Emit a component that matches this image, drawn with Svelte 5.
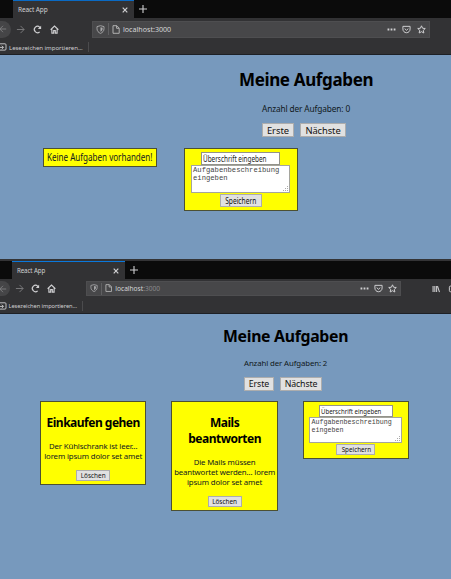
<script>
  const none = [];
  const tasks = [
    { title: ['Einkaufen gehen'], text: ['Der Kühlschrank ist leer...', 'lorem ipsum dolor set amet'] },
    { title: ['Mails', 'beantworten'], text: ['Die Mails müssen', 'beantwortet werden... lorem', 'ipsum dolor set amet'] }
  ];
</script>

{#snippet chrome(library)}
  <header>
    <div class="tabs">
      <div class="tab">
        <span class="tabname">React App</span>
        <svg class="close" viewBox="0 0 8 8"><path d="M1.7 1.7 6.3 6.3M6.3 1.7 1.7 6.3" stroke-width="1.2" /></svg>
      </div>
      <svg class="plus" viewBox="0 0 8 8"><path d="M4 0V8M0 4H8" stroke-width="1.1" /></svg>
    </div>
    <div class="toolbar">
      <div class="back"><svg viewBox="0 0 10 10"><path d="M9 5H1M5 1 1 5 5 9" stroke-width="1.1" /></svg></div>
      <svg class="forward" viewBox="0 0 10 10"><path d="M1 5H9M5 1 9 5 5 9" stroke-width="1.1" /></svg>
      <svg class="reload" viewBox="0 0 10 10"><path d="M7.4 7.6A3.5 3.5 0 1 1 7.6 2.6L8.4 3.6" stroke-width="1.3" /><path d="M9 .8V4.5H5.3Z" fill="currentColor" stroke="none" /></svg>
      <svg class="home" viewBox="0 0 10 10"><path d="M.7 5.3 5 1.1 9.3 5.3M2.1 4.7V9H4.1V6.3H5.9V9H7.9V4.7" stroke-width="1.25" /></svg>
      <div class="address">
        <svg class="shield" viewBox="0 0 9 9"><path d="M4.5.7 8 1.6V3.7C8 6 6.5 7.6 4.5 8.4 2.5 7.6 1 6 1 3.7V1.6Z" stroke-width=".9" /><path d="M4.5 2.2 6.6 2.8V3.8C6.6 5.2 5.8 6.2 4.5 6.8Z" fill="currentColor" stroke="none" /></svg>
        <i></i>
        <svg class="page" viewBox="0 0 8 9"><path d="M1 .7H4.8L7.2 3.1V8.3H1ZM4.6.8V3.3H7" stroke-width=".9" /></svg>
        <span class="url">localhost<b>:3000</b></span>
        <svg class="dots" viewBox="0 0 10 10"><path d="M.6 4h2v2h-2zM4 4h2v2H4zM7.4 4h2v2h-2z" fill="currentColor" stroke="none" /></svg>
        <svg class="pocket" viewBox="0 0 10 10"><path d="M1 1.5H9V4.4C9 6.8 7.3 8.6 5 8.6S1 6.8 1 4.4ZM3 4 5 5.9 7 4" stroke-width="1.1" /></svg>
        <svg class="star" viewBox="0 0 10 10"><path d="M5 .9 6.2 3.6 9.2 3.9 7 5.9 7.6 8.9 5 7.4 2.4 8.9 3 5.9 .8 3.9 3.8 3.6Z" stroke-width="1.1" /></svg>
      </div>
      {#if library}
        <svg class="library" viewBox="0 0 9 9"><path d="M1.2 1V8M3.2 1V8M5.2 1V8M6.2 1.2 8.4 8" stroke-width="1.2" /></svg>
        <svg class="sidebar" viewBox="0 0 9 9"><path d="M9 1.2H2.3Q1 1.2 1 2.5V6.3Q1 7.6 2.3 7.6H9M4.3 1V7.6" stroke-width="1.1" /></svg>
      {/if}
    </div>
    <div class="bookmarks">
      <svg viewBox="0 0 8 8"><path d="M0 .8H6Q7 .8 7 1.8V6Q7 7.1 6 7.1H0M1 4.4H4.3M2.8 2.7 4.5 4.4 2.8 6" stroke-width=".9" /></svg>
      <span>Lesezeichen importieren...</span>
      <i></i>
    </div>
  </header>
{/snippet}

{#snippet app(items)}
  <main>
    <div class="head">
      <h1>Meine Aufgaben</h1>
      <p class="count">Anzahl der Aufgaben: {items.length}</p>
      <div class="nav"><div class="btn first">Erste</div><div class="btn next">Nächste</div></div>
    </div>
    <div class="cards">
      {#each items as item}
        <article class="card">
          <h2>{#each item.title as line}<span>{line}</span>{/each}</h2>
          <p>{#each item.text as line}<span>{line}</span>{/each}</p>
          <div class="btn delete">Löschen</div>
        </article>
      {:else}
        <div class="card empty"><span>Keine Aufgaben vorhanden!</span></div>
      {/each}
      <div class="card form">
        <div class="input"><span>Überschrift eingeben</span></div>
        <div class="area">
          <span>Aufgabenbeschreibung</span><span>eingeben</span>
          <svg viewBox="0 0 6 6"><path d="M5 0h1v1H5zM3 2h1v1H3zM5 2h1v1H5zM1 4h1v1H1zM3 4h1v1H3zM5 4h1v1H5z" fill="#aaa" stroke="none" /></svg>
        </div>
        <div class="btn save"><span>Speichern</span></div>
      </div>
    </div>
  </main>
{/snippet}

<div class="shots">
  <section class="one">{@render chrome(false)}{@render app(none)}</section>
  <section class="two">{@render chrome(true)}{@render app(tasks)}</section>
</div>

<style>
  :global(body) { margin: 0; background: #7799bd; }
  * { box-sizing: border-box; }
  .shots { width: 451px; height: 579px; overflow: hidden; font-family: "Noto Sans", "Open Sans", sans-serif; color: #101820; }
  section { overflow: hidden; background: #7799bd; }
  .one { height: 259px; --ts: 6.5px; }
  .two { height: 320px; border-top: 2px solid #343436; --ts: 6.2px; }
  svg { display: block; flex: none; fill: none; stroke: currentColor; overflow: visible; }
  h1, h2, p { margin: 0; }
  span { white-space: nowrap; }

  header { background: #323234; color: #cfcfd1; border-bottom: 1px solid #1d2025; height: 55px; }
  .two header { height: 53px; }
  .tabs { height: 18px; background: #0b0b0b; display: flex; padding-left: 13px; align-items: center; }
  .two .tabs { padding-left: 12px; height: 18px; }
  .tab { width: 121px; height: 18px; background: #323234; border-top: 1px solid #0a78dc; display: flex; align-items: center; justify-content: space-between; padding: 0 5px 0 5px; }
  .one .tab { border-top-color: #0a6ac4; }
  .two .tab { width: 112.5px; }
  .tabname { font-size: var(--ts); line-height: 16px; letter-spacing: -.12px; }
  .close { width: 8px; height: 8px; }
  .plus { width: 8px; height: 8px; margin-left: 5px; }
  .toolbar { height: 22px; display: flex; align-items: center; }
  .two .toolbar { height: 19px; }
  .back { flex: none; width: 11px; height: 17px; background: #454547; border-radius: 0 9px 9px 0; display: flex; align-items: center; color: #828284; }
  .back svg { width: 8px; height: 8px; margin-left: -1px; }
  .two .back { width: 10px; height: 15px; }
  .forward { width: 9px; height: 9px; margin-left: 5px; color: #777779; }
  .reload { width: 9px; height: 9px; margin-left: 8px; }
  .home { width: 9px; height: 9px; margin-left: 8px; }
  .two .reload { margin-left: 7px; }
  .two .home { margin-left: 7px; }
  .address { flex: none; margin-left: 33px; width: 338px; height: 17px; background: #474749; border: 1px solid #4e4e50; display: flex; align-items: center; padding-left: 3px; }
  .two .address { margin-left: 30px; width: 315px; height: 15px; }
  .shield { width: 9px; height: 9px; color: #aaaaac; }
  .address i { width: 1px; height: 12px; background: #606062; margin: 0 3px; }
  .page { width: 8px; height: 9px; color: #bbb; }
  .url { font-size: 7.1px; margin-left: 3px; color: #d5d5d7; }
  .url b { font-weight: 400; }
  .two .url { font-size: 6.6px; }
  .two .url b { color: #89898b; }
  .two .shield, .two .page { zoom: .9; }
  .dots { width: 9px; height: 9px; margin-left: auto; }
  .pocket { width: 9px; height: 9px; margin-left: 6px; }
  .star { width: 9px; height: 9px; margin: 0 3px 0 6px; }
  .two .pocket, .two .star { margin-left: 5px; }
  .library { width: 8px; height: 8px; margin-left: 31px; }
  .sidebar { width: 9px; height: 8px; margin-left: 8px; }
  .bookmarks { height: 14px; display: flex; align-items: center; }
  .two .bookmarks { height: 15px; }
  .bookmarks svg { width: 8px; height: 8px; margin-left: -1px; }
  .bookmarks span { font-size: 6.1px; margin-left: 2px; letter-spacing: -.06px; }
  .two .bookmarks span { font-size: 5.7px; letter-spacing: -.07px; margin-left: 1.5px; }
  .bookmarks i { width: 1px; height: 10px; background: #4b4b4d; margin-left: 5px; }

  .head { padding-left: 239px; height: 93px; padding-top: 15px; }
  h1 { color: #000; font-size: 17px; line-height: 20px; white-space: nowrap; letter-spacing: -.36px; }
  .count { padding-left: 23px; margin-top: 13px; font-size: 8.3px; line-height: 12px; white-space: nowrap; letter-spacing: -.13px; }
  .nav { display: flex; padding-left: 23px; margin-top: 8px; gap: 6px; }
  .btn { background: #e1e1e1; border: 1px solid #adadad; white-space: nowrap; display: flex; align-items: center; justify-content: center; overflow: hidden; color: #111; }
  .first { width: 32px; height: 14px; font-size: 9.4px; }
  .next { width: 46px; height: 14px; font-size: 9.4px; letter-spacing: -.1px; }
  .two .head { padding: 13px 0 0 223px; height: 87px; }
  .two h1 { font-size: 15.8px; line-height: 19px; letter-spacing: -.3px; }
  .two .count { padding-left: 21px; margin-top: 11px; font-size: 7.8px; letter-spacing: -.1px; }
  .two .nav { padding-left: 21px; margin-top: 8px; }
  .two .first { width: 30px; font-size: 8.8px; letter-spacing: -.1px; }
  .two .next { width: 42px; font-size: 8.8px; letter-spacing: -.15px; }

  .cards { display: flex; align-items: flex-start; padding-left: 43px; gap: 27px; }
  .two .cards { padding-left: 40px; gap: 25px; }
  .card { flex: none; width: 114px; background: #ff0; border: 1px solid #4c5033; display: flex; flex-direction: column; align-items: center; }
  .two .card { width: 106.4px; }
  .empty { height: 19px; justify-content: center; font-size: 10.2px; line-height: 17px; }
  .empty span { transform: scaleX(.79); }
  .form { height: 63px; padding: 3px 1px 0 0; }
  .input { width: 79px; height: 13px; background: #fff; border: 1px solid #92928a; font-size: 8.2px; line-height: 11px; padding-left: 1px; color: #222; }
  .input span { display: inline-block; transform: scaleX(.78); transform-origin: left; }
  .area { width: 99px; height: 28px; background: #fff; border: 1px solid #a5a59d; font: 7.2px/7.5px "Liberation Mono", monospace; padding: 1px; display: flex; flex-direction: column; color: #444; position: relative; }
  .area svg { position: absolute; right: 1px; bottom: 0; width: 6px; height: 6px; }
  .save { width: 42px; height: 13px; margin-top: 1px; font-size: 8px; }
  .save span { transform: scaleX(.83); }
  .two .form { height: 58px; padding: 3px 0 0; }
  .two .input { width: 74px; height: 12px; font-size: 7.4px; line-height: 10px; }
  .two .input span { transform: scaleX(.82); }
  .two .area { width: 93px; height: 26px; font-size: 6.7px; line-height: 7.5px; }
  .two .save { width: 39px; height: 11px; margin-top: 1px; font-size: 7px; }
  .two .save span { transform: scaleX(.9); }
  article { padding-top: 13px; padding-bottom: 3px; }
  h2 { color: #000; font-size: 12px; line-height: 15.5px; letter-spacing: -.5px; display: flex; flex-direction: column; align-items: center; }
  article p { margin-top: 10.5px; font-size: 7.8px; letter-spacing: -.14px; line-height: 10.4px; display: flex; flex-direction: column; align-items: center; }
  .delete { width: 34px; height: 11px; margin-top: 8.3px; font-size: 6.4px; }
</style>
